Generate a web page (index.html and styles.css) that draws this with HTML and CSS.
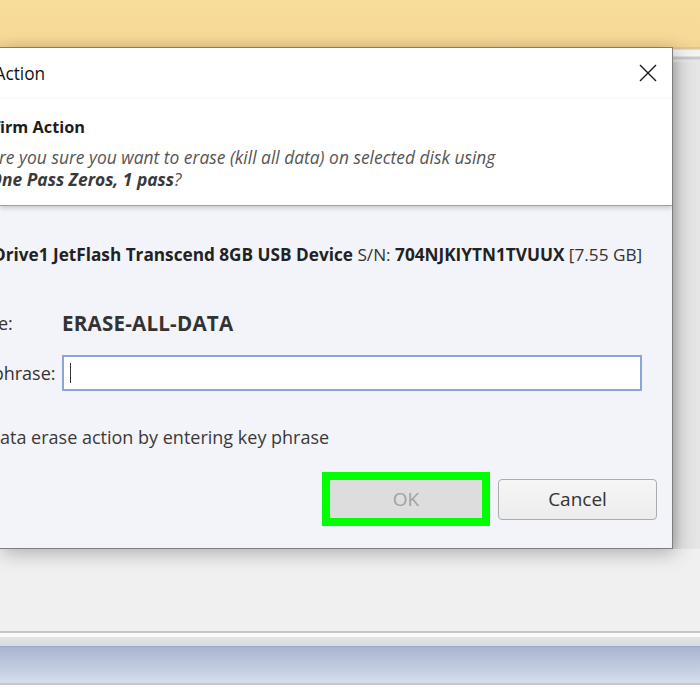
FILE: index.html
```html
<!DOCTYPE html>
<html>
<head>
<meta charset="utf-8">
<link rel="stylesheet" href="styles.css">
</head>
<body>
<div class="screen">
  <div class="topbar"></div>
  <div class="main">
    <div class="dialog">
      <div class="titlebar">
        <span class="title"><span class="pre">Confirm</span> Action</span>
        <svg class="close" width="18" height="18" viewBox="0 0 18 18"><path d="M1 1 L17 17 M17 1 L1 17" stroke="#1a1a1a" stroke-width="1.4" fill="none"/></svg>
      </div>
      <div class="header">
        <div class="h-title"><span class="pre">Conf</span>irm Action</div>
        <div class="h-text l1"><span class="pre">A</span>re you sure you want to erase (kill all data) on selected disk using</div>
        <div class="h-text l2"><b><span class="pre">O</span>ne Pass Zeros, 1 pass</b>?</div>
      </div>
      <div class="body">
        <div class="device"><b>Drive1 JetFlash Transcend 8GB USB Device</b> S/N: <b>704NJKIYTN1TVUUX</b> [7.55 GB]</div>
        <div class="row row-key">
          <span class="label lk"><span class="pre">Key phras</span>e:</span>
          <span class="phrase">ERASE-ALL-DATA</span>
        </div>
        <div class="row row-input">
          <span class="label li"><span class="pre">Enter key</span> phrase:</span>
          <div class="input"><span class="caret"></span></div>
        </div>
        <div class="hint"><span class="pre">Confirm d</span>ata erase action by entering key phrase</div>
        <div class="buttons">
          <div class="ok-hl"><div class="btn ok">OK</div></div>
          <div class="btn cancel">Cancel</div>
        </div>
      </div>
    </div>
    <div class="side">
      <div class="side-top"></div>
      <div class="side-panel"></div>
    </div>
  </div>
  <div class="bottom">
    <div class="b-line"></div>
    <div class="b-white"></div>
    <div class="b-grey"></div>
    <div class="b-blue"></div>
    <div class="b-line2"></div>
  </div>
</div>
</body>
</html>
```

FILE: styles.css
```css
* { box-sizing: border-box; }
html, body { margin: 0; padding: 0; }
body {
  width: 700px;
  height: 700px;
  overflow: hidden;
  background: #ffffff;
  font-family: "Open Sans", "Noto Sans", sans-serif;
}
.screen { display: flex; flex-direction: column; width: 700px; height: 700px; }

.topbar {
  height: 47px;
  background: linear-gradient(#f8dc98, #f7d998 80%, #f2d391);
  flex: none;
}

.main {
  height: 584px;
  flex: none;
  display: flex;
  background: linear-gradient(#e9e9e9, #efefef 30%, #f0f0f0);
}

.dialog {
  width: 673px;
  height: 502px;
  flex: none;
  background: #f3f4f9;
  border: 1px solid #7e7e7e;
  border-left: none;
  box-shadow: 2px 4px 18px rgba(0,0,0,0.28);
  display: flex;
  flex-direction: column;
  position: relative;
  z-index: 1;
  overflow: hidden;
}

.pre {
  display: inline-block;
  width: 0;
  direction: rtl;
  white-space: nowrap;
}

.titlebar {
  height: 51px;
  background: #ffffff;
  display: flex;
  align-items: center;
  justify-content: space-between;
  padding-right: 15px;
  flex: none;
}
.title {
  font-size: 17.3px;
  color: #111;
  margin-left: -10px;
  white-space: nowrap;
}
.close { margin-top: -2px; }

.header {
  height: 107px;
  background: #ffffff;
  border-bottom: 1px solid #a0a0a0;
  box-shadow: 0 2px 5px rgba(0,0,0,0.18);
  flex: none;
  position: relative;
  z-index: 1;
  white-space: nowrap;
}
.h-title {
  font-size: 16.3px;
  font-weight: 700;
  color: #1d1d1d;
  margin-top: 17px;
  line-height: 22px;
}
.h-text {
  font-size: 17.4px;
  font-style: italic;
  color: #555;
  line-height: 22px;
}
.h-text.l1 { margin-top: 8px; margin-left: -1px; }
.h-text.l2 { margin-left: 2px; }
.h-text b { color: #3a3a3a; }

.body {
  flex: 1;
  display: flex;
  flex-direction: column;
  white-space: nowrap;
  color: #2b2b2b;
}
.device {
  font-size: 17.2px;
  margin-top: 38px;
  margin-left: -7px;
  line-height: 22px;
  color: #333;
}
.device b { color: #222; }

.row {
  display: grid;
  grid-template-columns: 62px 580px;
  align-items: center;
}
.row-key { margin-top: 43px; height: 26px; }
.row-input { margin-top: 20px; height: 36px; }
.label { font-size: 18px; color: #333; }
.lk { margin-left: -2px; }
.li { margin-left: -12px; }
.phrase {
  font-size: 20.6px;
  font-weight: 700;
  color: #333;
  letter-spacing: 0.2px;
}
.input {
  height: 36px;
  background: #fff;
  border: 2px solid #8aa5d6;
  display: flex;
  align-items: center;
  padding-left: 6px;
}
.caret { width: 1px; height: 20px; background: #333; }

.hint {
  font-size: 18px;
  color: #3a3a3a;
  margin-top: 34px;
  line-height: 24px;
}

.buttons {
  display: flex;
  margin-top: 23px;
  margin-left: 322px;
  align-items: center;
  gap: 8px;
}
.ok-hl {
  width: 168px;
  height: 54px;
  background: #00ff00;
  padding: 8px;
}
.btn {
  display: flex;
  align-items: center;
  justify-content: center;
  font-size: 19px;
}
.ok {
  height: 38px;
  background: #dddddd;
  color: #a2a2a2;
}
.cancel {
  width: 159px;
  height: 41px;
  border: 1px solid #acacac;
  border-radius: 4px;
  background: linear-gradient(#f6f6f6, #ececec);
  color: #333;
}

.side {
  flex: 1;
  display: flex;
  flex-direction: column;
}
.side-top {
  height: 15px;
  flex: none;
  background: linear-gradient(#d9c79c 0, #d9c79c 2px, #f1f1f1 3px, #f4f4f4 9px, #c9c9c9 10px, #c9c9c9 12px, #e6e6e6 13px);
}
.side-panel {
  height: 487px;
  background: linear-gradient(90deg, #cfcfcf, #e2e2e2 8px, #e6e6e6);
}

.bottom { flex: none; display: flex; flex-direction: column; }
.b-line { height: 2px; background: #c6c6c6; }
.b-white { height: 4px; background: #fafafa; }
.b-grey { height: 9px; background: linear-gradient(#e4e4e4, #d9dbe0); }
.b-blue {
  height: 37px;
  border-top: 1px solid #9eabc5;
  background: linear-gradient(#a9b5d0, #c3cde0 60%, #d6deeb);
}
.b-line2 { height: 2px; background: #c8c8c8; }
```
